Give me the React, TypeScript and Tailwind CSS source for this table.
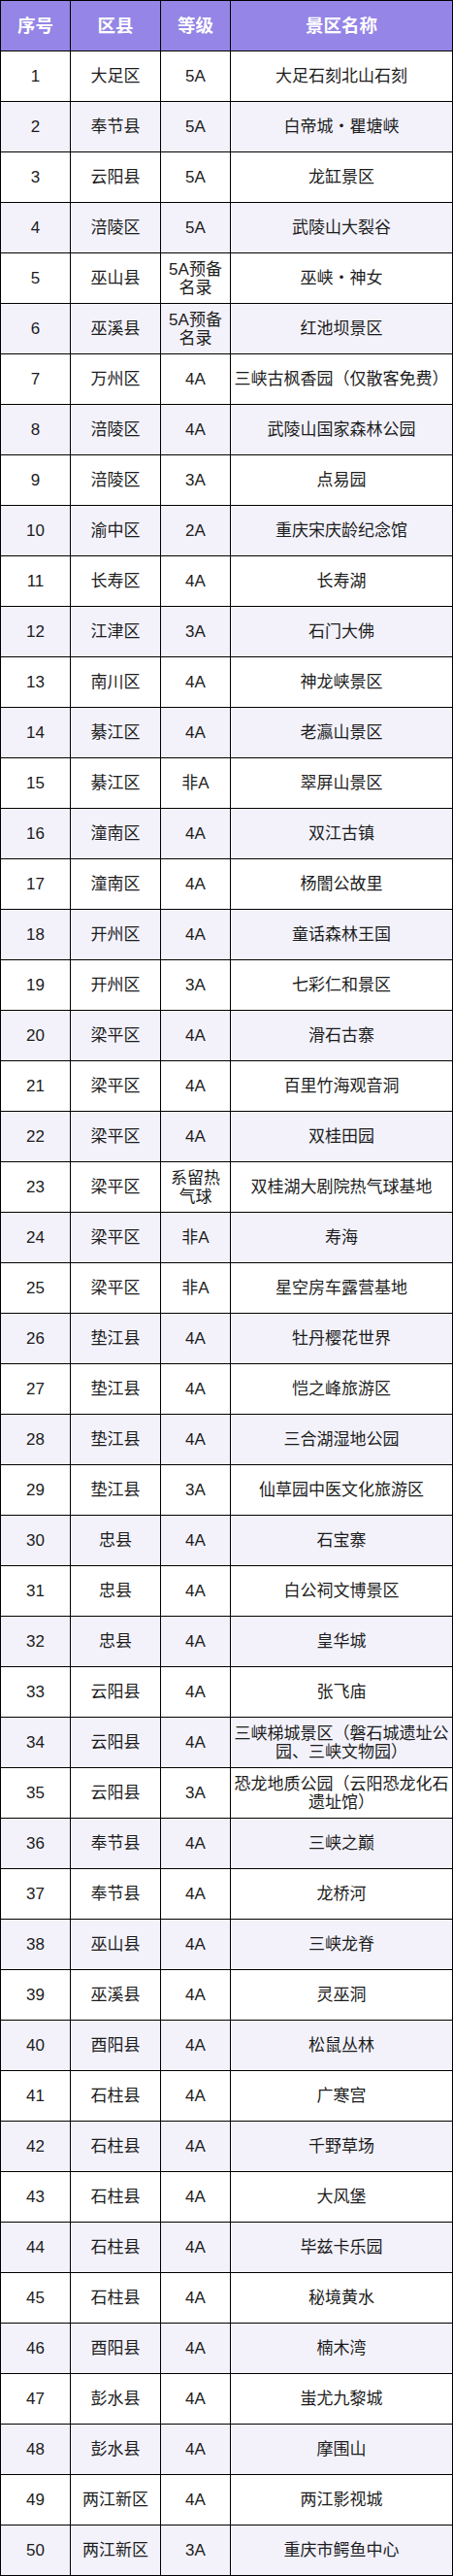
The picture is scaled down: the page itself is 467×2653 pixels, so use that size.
const rows: [string, string, string][] = [
  ["大足区", "5A", "大足石刻北山石刻"],
  ["奉节县", "5A", "白帝城・瞿塘峡"],
  ["云阳县", "5A", "龙缸景区"],
  ["涪陵区", "5A", "武陵山大裂谷"],
  ["巫山县", "5A预备名录", "巫峡・神女"],
  ["巫溪县", "5A预备名录", "红池坝景区"],
  ["万州区", "4A", "三峡古枫香园（仅散客免费）"],
  ["涪陵区", "4A", "武陵山国家森林公园"],
  ["涪陵区", "3A", "点易园"],
  ["渝中区", "2A", "重庆宋庆龄纪念馆"],
  ["长寿区", "4A", "长寿湖"],
  ["江津区", "3A", "石门大佛"],
  ["南川区", "4A", "神龙峡景区"],
  ["綦江区", "4A", "老瀛山景区"],
  ["綦江区", "非A", "翠屏山景区"],
  ["潼南区", "4A", "双江古镇"],
  ["潼南区", "4A", "杨闇公故里"],
  ["开州区", "4A", "童话森林王国"],
  ["开州区", "3A", "七彩仁和景区"],
  ["梁平区", "4A", "滑石古寨"],
  ["梁平区", "4A", "百里竹海观音洞"],
  ["梁平区", "4A", "双桂田园"],
  ["梁平区", "系留热气球", "双桂湖大剧院热气球基地"],
  ["梁平区", "非A", "寿海"],
  ["梁平区", "非A", "星空房车露营基地"],
  ["垫江县", "4A", "牡丹樱花世界"],
  ["垫江县", "4A", "恺之峰旅游区"],
  ["垫江县", "4A", "三合湖湿地公园"],
  ["垫江县", "3A", "仙草园中医文化旅游区"],
  ["忠县", "4A", "石宝寨"],
  ["忠县", "4A", "白公祠文博景区"],
  ["忠县", "4A", "皇华城"],
  ["云阳县", "4A", "张飞庙"],
  ["云阳县", "4A", "三峡梯城景区（磐石城遗址公园、三峡文物园）"],
  ["云阳县", "3A", "恐龙地质公园（云阳恐龙化石遗址馆）"],
  ["奉节县", "4A", "三峡之巅"],
  ["奉节县", "4A", "龙桥河"],
  ["巫山县", "4A", "三峡龙脊"],
  ["巫溪县", "4A", "灵巫洞"],
  ["酉阳县", "4A", "松鼠丛林"],
  ["石柱县", "4A", "广寒宫"],
  ["石柱县", "4A", "千野草场"],
  ["石柱县", "4A", "大风堡"],
  ["石柱县", "4A", "毕兹卡乐园"],
  ["石柱县", "4A", "秘境黄水"],
  ["酉阳县", "4A", "楠木湾"],
  ["彭水县", "4A", "蚩尤九黎城"],
  ["彭水县", "4A", "摩围山"],
  ["两江新区", "4A", "两江影视城"],
  ["两江新区", "3A", "重庆市鳄鱼中心"],
];

const cell =
  "flex items-center justify-center text-center border-r border-black leading-[19px]";

export default function App() {
  return (
    <div
      className="w-[467px] bg-white border-l border-t border-black text-[#1c1c1c]"
      style={{ fontFamily: '"Liberation Sans", "Noto Sans CJK SC", sans-serif' }}
    >
      <div className="grid grid-cols-[72px_93px_72px_229px] h-[52px] border-b border-black bg-[#9485e6] text-white font-bold text-[18.5px]">
        <div className={cell}>序号</div>
        <div className={cell}>区县</div>
        <div className={cell}>等级</div>
        <div className={cell}>景区名称</div>
      </div>
      {rows.map((r, i) => (
        <div
          key={i}
          className={
            "grid grid-cols-[72px_93px_72px_229px] h-[52px] border-b border-black text-[17px] " +
            (i % 2 === 1 ? "bg-[#f3f2fb]" : "bg-white")
          }
        >
          <div className={cell + " px-[1px]"}>{i + 1}</div>
          <div className={cell + " px-[1px]"}>{r[0]}</div>
          <div className={cell + " px-[4px]"}>{r[1]}</div>
          <div className={cell + " px-[3px]"}>{r[2]}</div>
        </div>
      ))}
    </div>
  );
}
